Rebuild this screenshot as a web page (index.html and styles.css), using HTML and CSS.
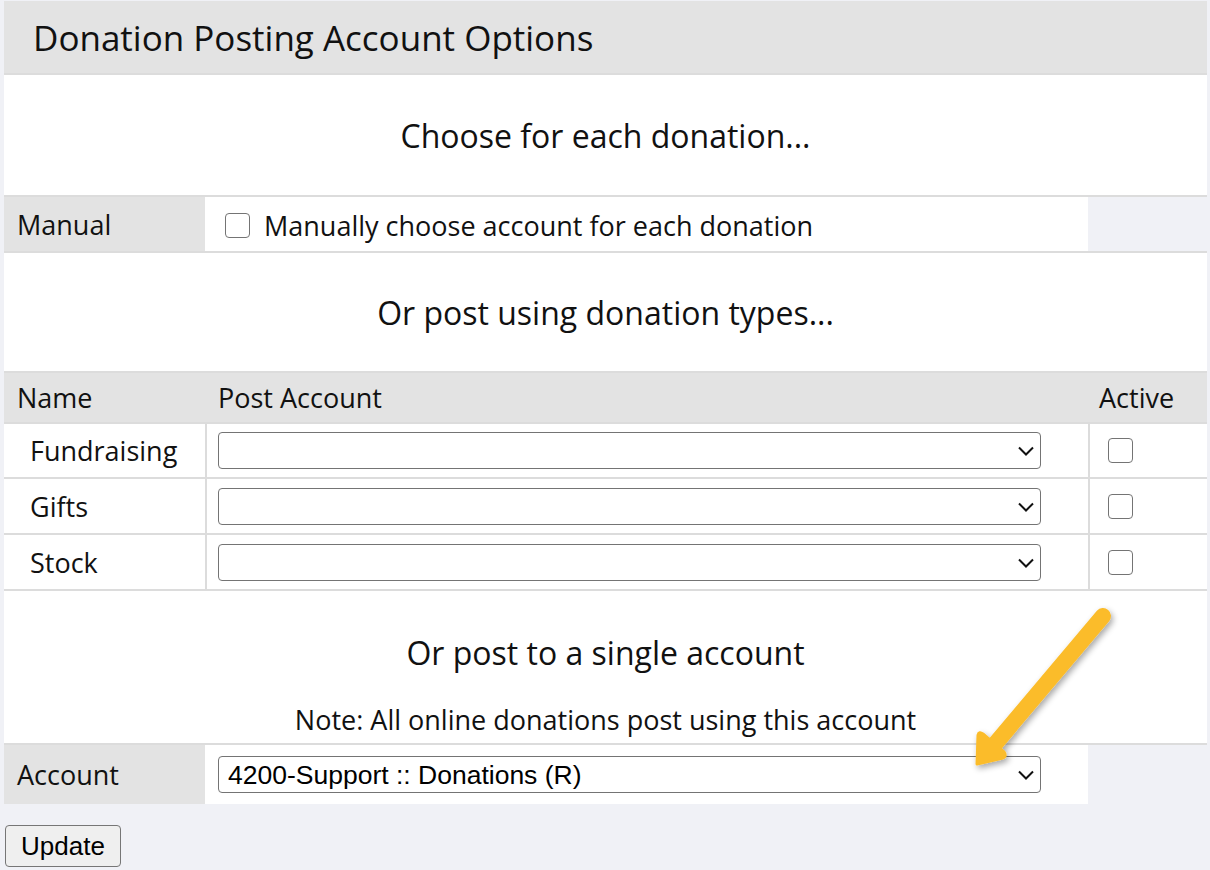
FILE: index.html
```html
<!DOCTYPE html>
<html>
<head>
<meta charset="utf-8">
<title>Donation Posting Account Options</title>
<link rel="stylesheet" href="styles.css">
</head>
<body>
<div class="page">
  <table class="opts">
    <colgroup>
      <col class="c1">
      <col class="c2">
      <col class="c3">
    </colgroup>
    <tr>
      <th colspan="3" class="title">Donation Posting Account Options</th>
    </tr>
    <tr>
      <td colspan="3" class="section s1">Choose for each donation...</td>
    </tr>
    <tr>
      <td class="label">Manual</td>
      <td class="field manual-field">
        <label class="check-label"><input type="checkbox" class="cb"> Manually choose account for each donation</label>
      </td>
      <td class="empty"></td>
    </tr>
    <tr>
      <td colspan="3" class="section s2">Or post using donation types...</td>
    </tr>
    <tr class="colhead">
      <th class="ch-name">Name</th>
      <th class="ch-post">Post Account</th>
      <th class="ch-active">Active</th>
    </tr>
    <tr class="dtype first">
      <td class="name">Fundraising</td>
      <td class="post"><div class="sel-wrap"><select class="sel"><option></option></select><svg class="chev" viewBox="0 0 16 10" width="16" height="10"><path d="M1 1.5 L8 8.5 L15 1.5" fill="none" stroke="#111" stroke-width="2"/></svg></div></td>
      <td class="active"><input type="checkbox" class="cb"></td>
    </tr>
    <tr class="dtype">
      <td class="name">Gifts</td>
      <td class="post"><div class="sel-wrap"><select class="sel"><option></option></select><svg class="chev" viewBox="0 0 16 10" width="16" height="10"><path d="M1 1.5 L8 8.5 L15 1.5" fill="none" stroke="#111" stroke-width="2"/></svg></div></td>
      <td class="active"><input type="checkbox" class="cb"></td>
    </tr>
    <tr class="dtype">
      <td class="name">Stock</td>
      <td class="post"><div class="sel-wrap"><select class="sel"><option></option></select><svg class="chev" viewBox="0 0 16 10" width="16" height="10"><path d="M1 1.5 L8 8.5 L15 1.5" fill="none" stroke="#111" stroke-width="2"/></svg></div></td>
      <td class="active"><input type="checkbox" class="cb"></td>
    </tr>
    <tr>
      <td colspan="3" class="section s3">
        <div class="s3-head">Or post to a single account</div>
        <div class="s3-note">Note: All online donations post using this account</div>
      </td>
    </tr>
    <tr class="acct">
      <td class="label">Account</td>
      <td class="field"><div class="sel-wrap"><select class="sel"><option>4200-Support :: Donations (R)</option></select><svg class="chev" viewBox="0 0 16 10" width="16" height="10"><path d="M1 1.5 L8 8.5 L15 1.5" fill="none" stroke="#111" stroke-width="2"/></svg></div></td>
      <td class="empty"></td>
    </tr>
  </table>
  <button class="update">Update</button>

  <svg class="arrow" width="180" height="200" viewBox="940 590 180 200">
    <defs>
      <filter id="sh" x="-30%" y="-30%" width="160%" height="160%">
        <feGaussianBlur in="SourceAlpha" stdDeviation="3"/>
        <feOffset dx="2" dy="3" result="b"/>
        <feComponentTransfer><feFuncA type="linear" slope="0.35"/></feComponentTransfer>
        <feMerge><feMergeNode/><feMergeNode in="SourceGraphic"/></feMerge>
      </filter>
    </defs>
    <g filter="url(#sh)">
      <path d="M1103 616 L990 750" stroke="#fbbc2b" stroke-width="16" stroke-linecap="round" fill="none"/>
      <path d="M977 764 L978 735 Q979 731 983 734 L1004 752 Q1007 756 1003 758 Z" fill="#fbbc2b" stroke="#fbbc2b" stroke-width="3" stroke-linejoin="round"/>
    </g>
  </svg>
</div>
</body>
</html>
```

FILE: styles.css
```css
html, body {
  margin: 0;
  padding: 0;
  background: #f0f1f6;
}
body {
  padding: 1px 3px 0 4px;
  font-family: "Open Sans", "Noto Sans", sans-serif;
  color: #111;
}
.page {
  position: relative;
}
.opts {
  width: 1203px;
  border-collapse: separate;
  border-spacing: 0;
  table-layout: fixed;
}
.c1 { width: 201px; }
.c2 { width: 883px; }
.c3 { width: 119px; }
.opts td, .opts th {
  padding: 0;
  border-bottom: 2px solid #dcdcdc;
  font-weight: normal;
  text-align: left;
  box-sizing: border-box;
  white-space: nowrap;
}
.opts .title {
  height: 74px;
  background: #e3e3e3;
  font-size: 35px;
  padding-left: 29px;
  vertical-align: middle;
}
.opts .section {
  background: #fff;
  text-align: center;
  font-size: 32px;
}
.s1 { height: 122px; }
.s2 { height: 120px; }
.opts .s3 {
  height: 154px;
  vertical-align: top;
}
.s3-head {
  padding-top: 41px;
  line-height: 42px;
}
.s3-note {
  margin-top: 29px;
  font-size: 27px;
  line-height: 34px;
}
.opts .label {
  background: #e3e3e3;
  font-size: 27px;
  padding-left: 13px;
}
.opts .field {
  background: #fff;
  padding-left: 13px;
}
.opts .manual-field { height: 56px; padding-top: 3px; }
.check-label {
  display: flex;
  align-items: center;
  gap: 14px;
  padding-left: 7px;
  font-size: 27px;
}
.cb {
  appearance: none;
  -webkit-appearance: none;
  width: 25px;
  height: 25px;
  margin: 0;
  border: 1.5px solid #747474;
  border-radius: 4px;
  background: #fff;
  box-sizing: border-box;
  flex: none;
}
.opts .colhead th {
  height: 51px;
  background: #e3e3e3;
  font-size: 27px;
}
.opts .ch-name { padding-left: 13px; }
.opts .ch-post { padding-left: 13px; }
.opts .ch-active { padding-left: 11px; }
.opts .dtype td {
  height: 56px;
  background: #fff;
}
.opts .dtype.first td { height: 55px; }
.opts .name {
  padding-left: 26px;
  font-size: 27px;
}
.opts .post {
  padding-left: 11px;
  border-left: 2px solid #dcdcdc;
}
.opts .active {
  padding-left: 18px;
  vertical-align: middle;
  border-left: 2px solid #dcdcdc;
}
.active .cb { display: block; }
.sel-wrap {
  position: relative;
  width: 823px;
  height: 37px;
}
.sel {
  appearance: none;
  -webkit-appearance: none;
  width: 100%;
  height: 100%;
  margin: 0;
  border: 1.5px solid #747474;
  border-radius: 4px;
  background: #fff;
  font-family: "Liberation Sans", Arial, sans-serif;
  font-size: 26.5px;
  color: #000;
  padding: 0 0 0 9px;
  box-sizing: border-box;
}
.chev {
  position: absolute;
  right: 7px;
  top: 14px;
  pointer-events: none;
}
.opts .acct td {
  height: 59px;
  border-bottom: none;
}
.update {
  display: block;
  margin: 21px 0 0 1px;
  width: 116px;
  height: 42px;
  font-family: "Liberation Sans", Arial, sans-serif;
  font-size: 26px;
  color: #000;
  background: #efefef;
  border: 1.5px solid #767676;
  border-radius: 4px;
  padding: 0;
}
.arrow {
  position: absolute;
  left: 936px;
  top: 589px;
}
```
